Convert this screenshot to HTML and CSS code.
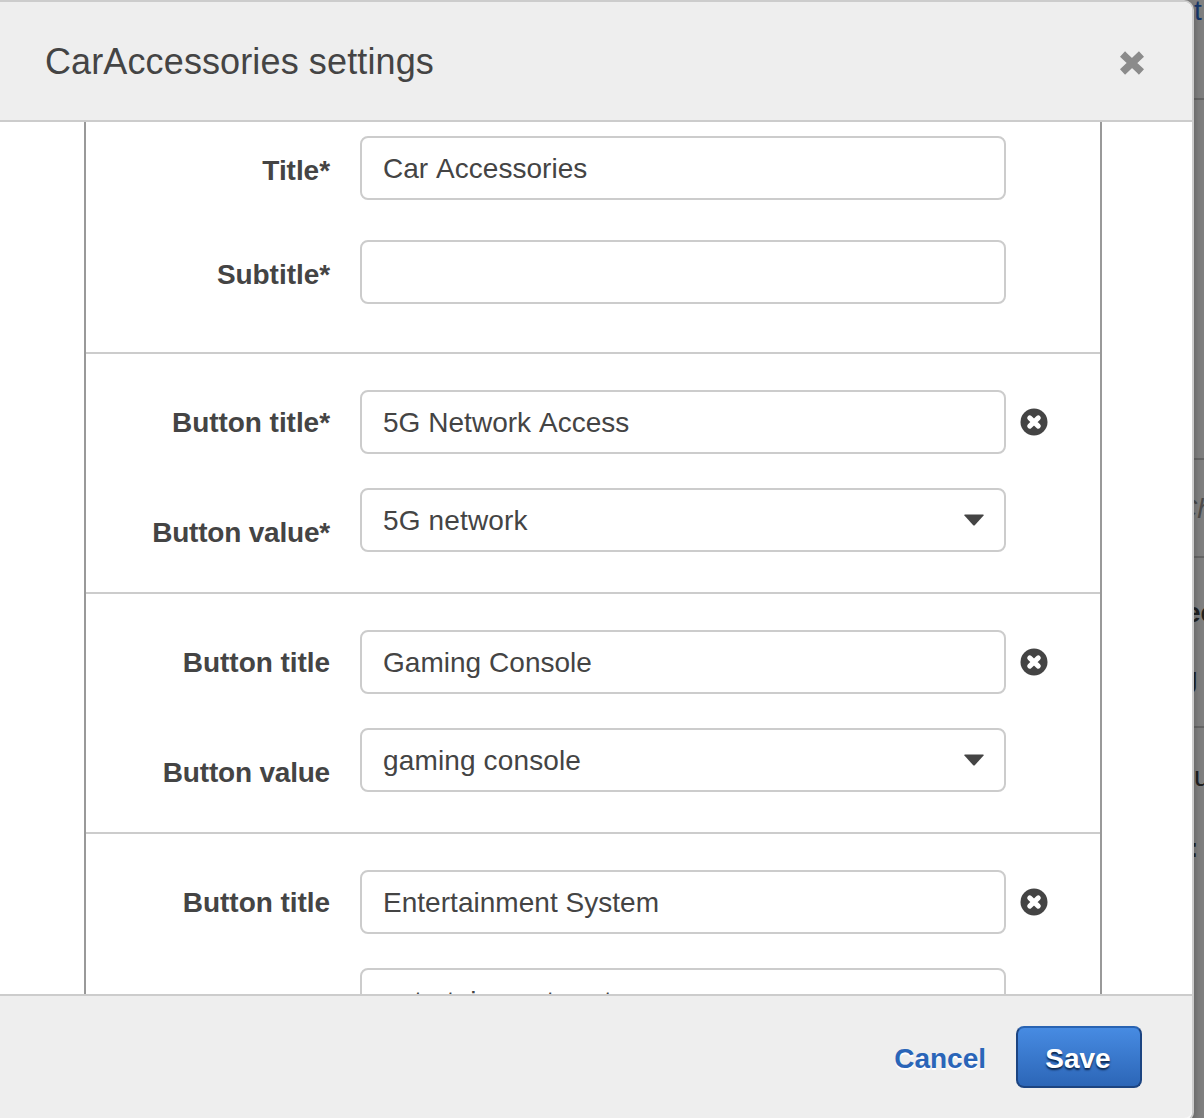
FILE: index.html
```html
<!DOCTYPE html>
<html lang="en">
<head>
<meta charset="utf-8">
<title>CarAccessories settings</title>
<link rel="stylesheet" href="styles.css">
</head>
<body>
<div class="page">
  <div class="modal">
    <header class="modal-header">
      <h1 class="modal-title">CarAccessories settings</h1>
      <svg class="close" width="24" height="24" viewBox="0 0 24 24"><path d="M5.200 5.600L18.800 18.400M18.800 5.600L5.200 18.400" stroke="#8b8b8b" stroke-width="7.400" stroke-linecap="square"/></svg>
    </header>
    <main class="modal-body">
      <div class="card">
        <section class="group group-head">
          <div class="row"><label class="label label-head">Title*</label><div class="field">Car Accessories</div></div>
          <div class="row"><label class="label label-head">Subtitle*</label><div class="field"></div></div>
        </section>
        <section class="group">
          <div class="row"><label class="label">Button title*</label><div class="field">5G Network Access</div><svg class="remove" width="28" height="28" viewBox="0 0 28 28"><circle cx="14" cy="14" r="13.5"/><path d="M9.700 9.900L18.300 18.100M18.300 9.900L9.700 18.100"/></svg></div>
          <div class="row"><label class="label label-value">Button value*</label><div class="field select">5G network<svg class="caret" width="20" height="12" viewBox="0 0 20 12"><path d="M1 .5h18q1.500 0 .6 1L11 11q-1 1-2 0L.4 1.500Q-.5.5 1 .5z"/></svg></div></div>
        </section>
        <section class="group">
          <div class="row"><label class="label">Button title</label><div class="field">Gaming Console</div><svg class="remove" width="28" height="28" viewBox="0 0 28 28"><circle cx="14" cy="14" r="13.5"/><path d="M9.700 9.900L18.300 18.100M18.300 9.900L9.700 18.100"/></svg></div>
          <div class="row"><label class="label label-value">Button value</label><div class="field select">gaming console<svg class="caret" width="20" height="12" viewBox="0 0 20 12"><path d="M1 .5h18q1.500 0 .6 1L11 11q-1 1-2 0L.4 1.500Q-.5.5 1 .5z"/></svg></div></div>
        </section>
        <section class="group">
          <div class="row"><label class="label">Button title</label><div class="field">Entertainment System</div><svg class="remove" width="28" height="28" viewBox="0 0 28 28"><circle cx="14" cy="14" r="13.5"/><path d="M9.700 9.900L18.300 18.100M18.300 9.900L9.700 18.100"/></svg></div>
          <div class="row"><label class="label label-value">Button value</label><div class="field select select-last">entertainment system<svg class="caret" width="20" height="12" viewBox="0 0 20 12"><path d="M1 .5h18q1.500 0 .6 1L11 11q-1 1-2 0L.4 1.500Q-.5.5 1 .5z"/></svg></div></div>
        </section>
      </div>
    </main>
    <footer class="modal-footer">
      <a class="cancel">Cancel</a>
      <button class="save">Save</button>
    </footer>
  </div>
  <aside class="behind">
    <div class="strip strip-link"><span>t</span></div>
    <div class="strip strip-blank"></div>
    <div class="strip strip-hint"><span>Ch</span></div>
    <div class="strip strip-need"><b>ee</b><span>g</span></div>
    <div class="strip strip-rest"><span>u</span><b>:</b></div>
  </aside>
</div>
</body>
</html>
```

FILE: styles.css
```css
* { box-sizing: border-box; }
body {
  margin: 0;
  height: 1118px;
  overflow: hidden;
  background: #808080;
  color: #444;
  font: 28px/32px "Liberation Sans", Arial, sans-serif;
}
.page { display: flex; height: 1118px; overflow: hidden; }
.modal {
  position: relative;
  z-index: 1;
  flex: none;
  display: flex;
  flex-direction: column;
  width: 1194px;
  height: 1122px;
  border: 2px solid #ccc;
  border-left: 0;
  border-radius: 0 10px 10px 0;
  background: #fff;
  box-shadow: 0 4px 10px rgba(0, 0, 0, .3);
  overflow: hidden;
}
.modal-header {
  flex: none;
  display: flex;
  align-items: center;
  justify-content: space-between;
  height: 120px;
  padding: 0 48px 0 45px;
  border-bottom: 2px solid #ccc;
  border-top-right-radius: 8px;
  background: #eee;
}
.modal-title { margin: 0 0 -1px; font-size: 36px; line-height: 42px; font-weight: 400; letter-spacing: .12px; }
.close { margin-top: 3px; border-radius: 5px; }
.modal-body { flex: none; height: 872px; overflow: hidden; padding: 0 90px 0 84px; }
.card { border: solid #999; border-width: 0 2px; }
.group {
  display: flex;
  flex-direction: column;
  gap: 34px;
  padding: 36px 0 40px;
  border-bottom: 2px solid #ccc;
}
.group-head { gap: 40px; padding: 14px 0 48px; }
.row { display: flex; align-items: center; height: 64px; }
.label {
  width: 244px;
  margin-right: 30px;
  padding-top: 2px;
  text-align: right;
  font-weight: 700;
  letter-spacing: -.05px;
}
.label-head { padding-top: 6px; }
.label-value { padding-top: 26px; letter-spacing: -.2px; }
.field {
  display: flex;
  align-items: center;
  justify-content: space-between;
  width: 646px;
  height: 64px;
  padding: 2px 20px 0 21px;
  border: 2px solid #ccc;
  border-radius: 8px;
  background: #fff;
  font-kerning: none;
  letter-spacing: .03px;
}
.select { letter-spacing: .14px; }
.select-last { padding-top: 4px; letter-spacing: 0; }
.caret { margin-top: -2px; fill: #444; }
.remove { margin-left: 14px; }
.remove circle { fill: #444; }
.remove path { stroke: #fff; stroke-width: 5; stroke-linecap: round; }
.modal-footer {
  flex: 1;
  display: flex;
  align-items: flex-start;
  justify-content: flex-end;
  gap: 30px;
  padding: 30px 50px 0 0;
  border-top: 2px solid #ccc;
  border-bottom-right-radius: 8px;
  background: #eee;
  box-shadow: inset 0 -2px 0 #f8f8f8;
}
.cancel { line-height: 66px; font-weight: 700; color: #2a65b8; text-shadow: 0 2px 0 #fff; }
.save {
  width: 126px;
  height: 62px;
  padding: 4px 2px 0 0;
  border: 2px solid #1c4481;
  border-top-color: #2963b2;
  border-radius: 8px;
  background: linear-gradient(#478be2, #2c66b7);
  color: #fff;
  font: 700 28px/32px "Liberation Sans", Arial, sans-serif;
  text-shadow: 0 2px 2px #0b2348;
}
.behind { flex: none; width: 10px; overflow: hidden; color: #222; }
.strip { display: flex; flex-direction: column; align-items: flex-start; border-bottom: 2px solid #666; }
.strip-link { height: 100px; color: #17376b; }
.strip-link span { margin: -5px 0 0 0; }
.strip-blank { height: 360px; }
.strip-hint { height: 98px; padding-top: 33px; font-style: italic; color: #4c4c4c; }
.strip-hint span { margin-left: -17px; }
.strip-need { height: 170px; padding-top: 39px; }
.strip-need b { margin-left: -9px; }
.strip-need span { margin: 33px 0 0 -12px; }
.strip-rest { height: 392px; padding-top: 33px; border: 0; }
.strip-rest b { margin: 39px 0 0 -5px; }
```
